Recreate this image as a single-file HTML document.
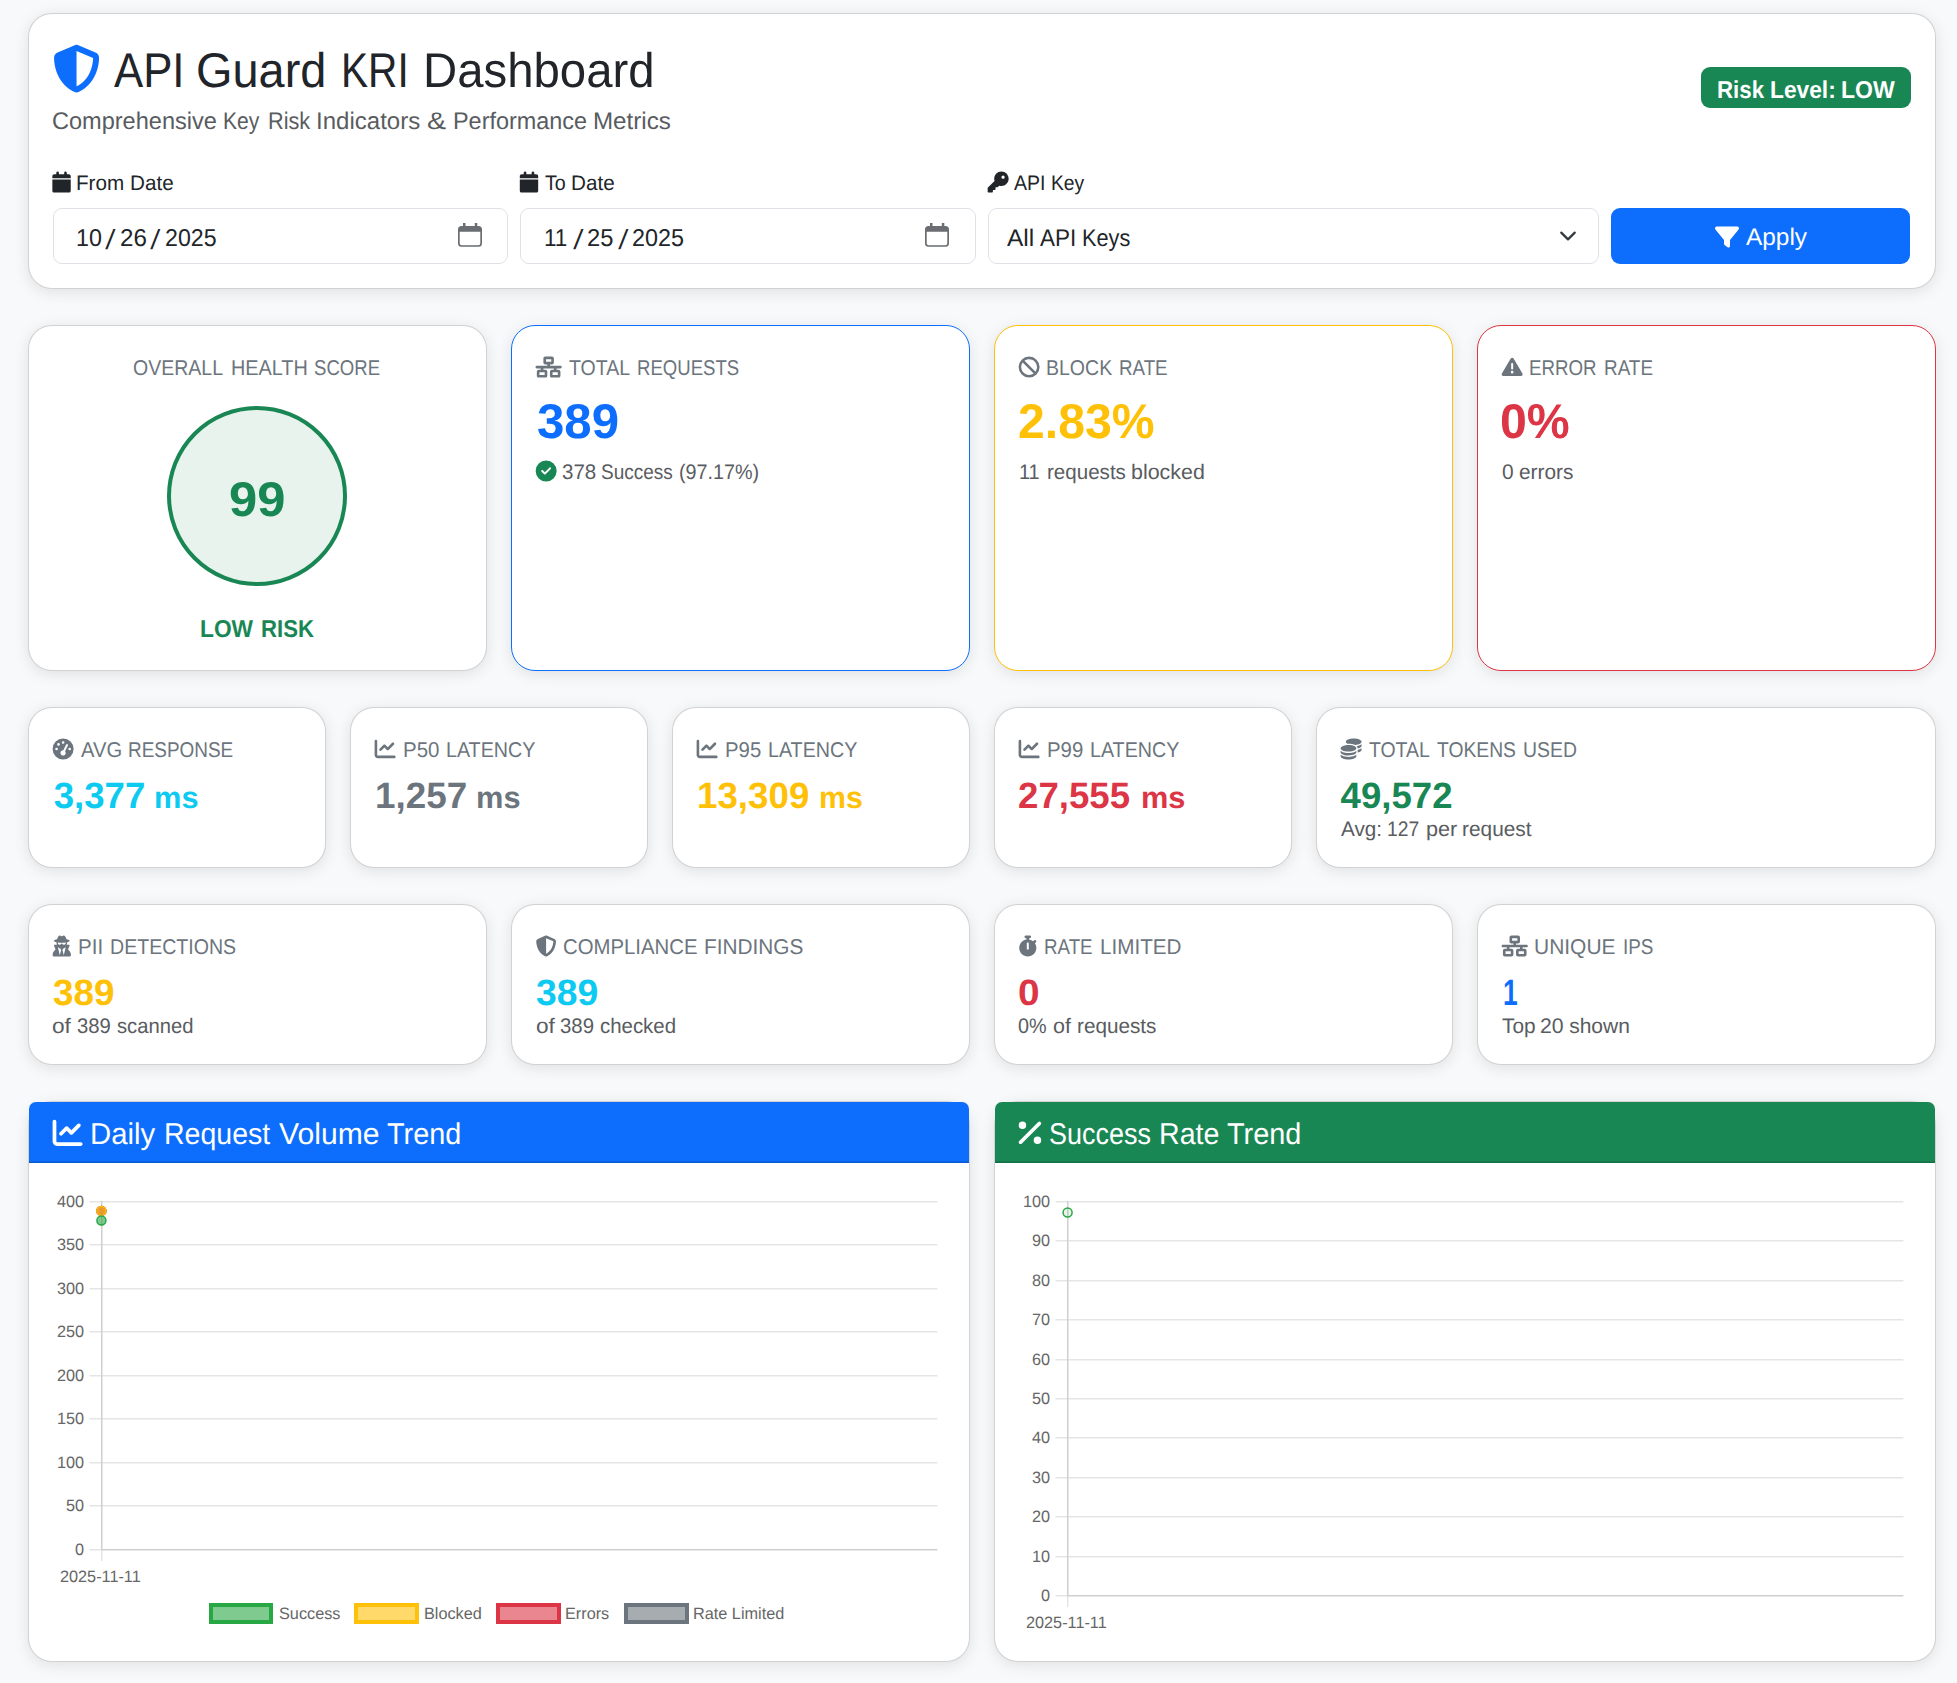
<!DOCTYPE html>
<html lang="en"><head><meta charset="utf-8"><title>API Guard KRI Dashboard</title>
<meta name="viewport" content="width=1957">
<style>
html,body{margin:0;padding:0}
body{width:1957px;height:1683px;position:relative;overflow:hidden;background:#f8f9fa;font-family:'Liberation Sans', sans-serif;text-rendering:geometricPrecision}
.card{position:absolute;box-sizing:border-box;background:#fff;border:1px solid rgba(0,0,0,.175);border-radius:24px;box-shadow:0 3px 15px rgba(0,0,0,.1)}
.hd{position:absolute;border-radius:7px 7px 0 0;box-shadow:inset 0 -1.5px 0 rgba(0,0,0,.175)}
.badge{position:absolute;background:#198754;border-radius:9px}
.inp{position:absolute;box-sizing:border-box;background:#fff;border:1px solid #dee2e6;border-radius:9px}
.btn{position:absolute;background:#0d6efd;border-radius:9px}
.circ{position:absolute;box-sizing:border-box;border:4.5px solid #198754;border-radius:50%;background:rgba(25,135,84,.1)}
.lg{position:absolute;box-sizing:border-box;width:64.5px;height:21px;border:4.5px solid;background-clip:padding-box}
.i{position:absolute;display:block;overflow:visible}
.p{margin:0;padding:0;font-size:0;line-height:0;font-weight:400}
.t{position:absolute;display:block;white-space:nowrap;line-height:1;margin:0;transform-origin:0 0}
</style></head>
<body>
<div class="card" style="left:28px;top:13px;width:1908px;height:276px;"></div>
<div class="card" style="left:28px;top:325px;width:459px;height:346px;"></div>
<div class="card" style="left:511px;top:325px;width:459px;height:346px;border-color:#0d6efd"></div>
<div class="card" style="left:994px;top:325px;width:459px;height:346px;border-color:#ffc107"></div>
<div class="card" style="left:1477px;top:325px;width:459px;height:346px;border-color:#dc3545"></div>
<div class="card" style="left:28px;top:707px;width:298px;height:161px;"></div>
<div class="card" style="left:350px;top:707px;width:298px;height:161px;"></div>
<div class="card" style="left:672px;top:707px;width:298px;height:161px;"></div>
<div class="card" style="left:994px;top:707px;width:298px;height:161px;"></div>
<div class="card" style="left:1316px;top:707px;width:620px;height:161px;"></div>
<div class="card" style="left:28px;top:904px;width:459px;height:161px;"></div>
<div class="card" style="left:511px;top:904px;width:459px;height:161px;"></div>
<div class="card" style="left:994px;top:904px;width:459px;height:161px;"></div>
<div class="card" style="left:1477px;top:904px;width:459px;height:161px;"></div>
<div class="card" style="left:28px;top:1101px;width:942px;height:561px;"></div>
<div class="card" style="left:994px;top:1101px;width:942px;height:561px;"></div>
<div class="hd" style="left:29px;top:1102px;width:940px;height:60.5px;background:#0d6efd"></div>
<div class="hd" style="left:995px;top:1102px;width:940px;height:60.5px;background:#198754"></div>
<div class="badge" style="left:1701px;top:67px;width:210px;height:41px"></div>
<div class="inp" style="left:53px;top:208px;width:455px;height:56px"></div>
<div class="inp" style="left:520px;top:208px;width:456px;height:56px"></div>
<div class="inp" style="left:988px;top:208px;width:611px;height:56px"></div>
<div class="btn" style="left:1611px;top:208px;width:299px;height:56px"></div>
<svg class="i" style="left:1558.5px;top:227px" width="18" height="18" viewBox="0 0 16 16"><path fill="none" stroke="#343a40" stroke-linecap="round" stroke-linejoin="round" stroke-width="2" d="m2 5 6 6 6-6"/></svg>
<svg class="i" style="left:458px;top:223px" width="24" height="24" viewBox="0 0 24 24"><path fill="#6a6e72" fill-rule="evenodd" d="M5 0h2.500v3h9.300V0h2.500v3h1.200a3.500 3.500 0 0 1 3.500 3.500v13.800a3.500 3.500 0 0 1-3.500 3.500h-17a3.500 3.500 0 0 1-3.500-3.500V6.500a3.500 3.500 0 0 1 3.500-3.500h1.500z M1.700 8.800v11.400a2 2 0 0 0 2 2h16.600a2 2 0 0 0 2-2V8.800z"/></svg>
<svg class="i" style="left:925px;top:223px" width="24" height="24" viewBox="0 0 24 24"><path fill="#6a6e72" fill-rule="evenodd" d="M5 0h2.500v3h9.300V0h2.500v3h1.200a3.500 3.500 0 0 1 3.500 3.500v13.800a3.500 3.500 0 0 1-3.500 3.500h-17a3.500 3.500 0 0 1-3.500-3.500V6.500a3.500 3.500 0 0 1 3.500-3.500h1.500z M1.700 8.800v11.400a2 2 0 0 0 2 2h16.600a2 2 0 0 0 2-2V8.800z"/></svg>
<svg class="i" style="left:52px;top:44px" width="50" height="50" viewBox="0 0 50 50"><path fill="#0d6efd" transform="translate(0.55 0.65) scale(0.09375)" d="M256 0c4.6 0 9.2 1 13.4 2.9l188.4 79.9c22 9.3 38.4 31 38.3 57.2-.5 99.2-41.3 280.7-213.6 363.2-16.7 8-36.1 8-52.8 0C57.3 420.7 16.6 239.2 16.1 140c-.1-26.2 16.3-47.9 38.3-57.2L242.7 2.9C246.9 1 251.4 0 256 0m0 66.8v378.1c138-66.8 175.1-214.8 176-303.4L256 66.9z"/></svg>
<svg class="i" style="left:52px;top:171px" width="20" height="23" viewBox="0 0 20 23"><path fill="#212529" transform="translate(0.36 0.60) scale(0.04102)" d="M96 32V64H48C21.5 64 0 85.5 0 112v48H448V112c0-26.5-21.5-48-48-48H352V32c0-17.7-14.3-32-32-32s-32 14.3-32 32V64H160V32c0-17.7-14.3-32-32-32S96 14.3 96 32zM448 192H0V464c0 26.5 21.5 48 48 48H400c26.500 0 48-21.500 48-48V192z"/></svg>
<svg class="i" style="left:519px;top:171px" width="21" height="23" viewBox="0 0 21 23"><path fill="#212529" transform="translate(0.80 0.60) scale(0.04102)" d="M96 32V64H48C21.5 64 0 85.5 0 112v48H448V112c0-26.5-21.5-48-48-48H352V32c0-17.7-14.3-32-32-32s-32 14.3-32 32V64H160V32c0-17.7-14.3-32-32-32S96 14.3 96 32zM448 192H0V464c0 26.5 21.5 48 48 48H400c26.500 0 48-21.500 48-48V192z"/></svg>
<svg class="i" style="left:987px;top:171px" width="23" height="23" viewBox="0 0 23 23"><path fill="#212529" transform="translate(0.65 0.55) scale(0.04102)" d="M336 352c97.2 0 176-78.8 176-176S433.2 0 336 0 160 78.8 160 176c0 18.7 2.9 36.8 8.3 53.7L7 391c-4.5 4.5-7 10.6-7 17v80c0 13.3 10.7 24 24 24h80c13.3 0 24-10.7 24-24v-40h40c13.3 0 24-10.7 24-24v-40h40c6.4 0 12.5-2.5 17-7l33.3-33.3c16.9 5.4 35 8.3 53.7 8.3m40-256a40 40 0 1 1 0 80 40 40 0 1 1 0-80"/></svg>
<svg class="i" style="left:1715px;top:225px" width="25" height="26" viewBox="0 0 25 26"><path fill="#fff" transform="translate(0.00 0.05) scale(0.04688)" d="M3.9 54.9C10.5 40.9 24.5 32 40 32H472c15.5 0 29.5 8.900 36.100 22.900s4.600 30.500-5.200 42.500L320 320.900V448c0 12.100-6.800 23.200-17.700 28.600s-23.800 4.300-33.500-3l-64-48c-8.100-6-12.800-15.500-12.800-25.600V320.900L9 97.300C-.7 85.400-2.800 68.800 3.900 54.900z"/></svg>
<svg class="i" style="left:535px;top:356px" width="28" height="23" viewBox="0 0 28 23"><path fill="#6c757d" transform="translate(0.50 0.60) scale(0.04102)" d="M256 64H384v64H256V64zM240 0c-26.500 0-48 21.500-48 48v96c0 26.500 21.500 48 48 48h48v32H32c-17.700 0-32 14.300-32 32s14.300 32 32 32h96v32H80c-26.500 0-48 21.500-48 48v96c0 26.500 21.500 48 48 48H240c26.500 0 48-21.500 48-48V368c0-26.500-21.500-48-48-48H192V288H448v32H400c-26.500 0-48 21.500-48 48v96c0 26.500 21.500 48 48 48H560c26.500 0 48-21.500 48-48V368c0-26.500-21.500-48-48-48H512V288h96c17.700 0 32-14.300 32-32s-14.300-32-32-32H352V192h48c26.500 0 48-21.500 48-48V48c0-26.500-21.500-48-48-48H240zM96 448V384H224v64H96zm320-64H544v64H416V384z"/></svg>
<svg class="i" style="left:535px;top:460px" width="23" height="23" viewBox="0 0 23 23"><path fill="#198754" transform="translate(0.65 0.45) scale(0.04102)" d="M256 512A256 256 0 1 0 256 0a256 256 0 1 0 0 512zM369 209L241 337c-9.400 9.400-24.600 9.400-33.900 0l-64-64c-9.400-9.400-9.400-24.600 0-33.900s24.600-9.400 33.900 0l47 47L335 175c9.400-9.400 24.600-9.400 33.900 0s9.400 24.600 0 33.900z"/></svg>
<svg class="i" style="left:1018px;top:356px" width="23" height="23" viewBox="0 0 23 23"><path fill="#6c757d" transform="translate(0.60 0.60) scale(0.04102)" d="M367.2 412.5 99.5 144.8C77.1 176.2 64 214.6 64 256c0 106 86 192 192 192 41.5 0 79.9-13.1 111.2-35.5m45.3-45.3C434.9 335.8 448 297.4 448 256c0-106-86-192-192-192-41.5 0-79.9 13.1-111.2 35.5zM0 256a256 256 0 1 1 512 0 256 256 0 1 1-512 0"/></svg>
<svg class="i" style="left:1501px;top:356px" width="23" height="23" viewBox="0 0 23 23"><path fill="#6c757d" transform="translate(0.65 0.40) scale(0.04102)" d="M256 32c14.200 0 27.300 7.500 34.500 19.800l216 368c7.300 12.400 7.300 27.700 .2 40.100S486.300 480 472 480H40c-14.300 0-27.600-7.700-34.700-20.100s-7-27.800 .2-40.100l216-368C228.700 39.500 241.800 32 256 32zm0 128c-13.300 0-24 10.700-24 24V296c0 13.300 10.700 24 24 24s24-10.700 24-24V184c0-13.300-10.700-24-24-24zm32 224a32 32 0 1 0 -64 0 32 32 0 1 0 64 0z"/></svg>
<svg class="i" style="left:52px;top:738px" width="23" height="23" viewBox="0 0 23 23"><path fill="#6c757d" transform="translate(0.60 0.50) scale(0.04102)" d="M0 256a256 256 0 1 1 512 0 256 256 0 1 1-512 0M288 96a32 32 0 1 0-64 0 32 32 0 1 0 64 0m-32 320c35.3 0 64-28.7 64-64 0-16.2-6-31.1-16-42.3l69.5-138.9c5.9-11.9 1.1-26.3-10.7-32.2s-26.3-1.1-32.2 10.7l-69.5 138.9c-1.7-.1-3.4-.2-5.1-.2-35.3 0-64 28.7-64 64s28.7 64 64 64m-80-272a32 32 0 1 0-64 0 32 32 0 1 0 64 0M96 288a32 32 0 1 0 0-64 32 32 0 1 0 0 64m352-32a32 32 0 1 0-64 0 32 32 0 1 0 64 0"/></svg>
<svg class="i" style="left:374px;top:738px" width="23" height="23" viewBox="0 0 23 23"><path fill="#6c757d" transform="translate(0.60 0.50) scale(0.04102)" d="M64 64c0-17.7-14.3-32-32-32S0 46.3 0 64v336c0 44.2 35.8 80 80 80h400c17.7 0 32-14.3 32-32s-14.3-32-32-32H80c-8.8 0-16-7.2-16-16zm406.6 86.6c12.5-12.5 12.5-32.8 0-45.3s-32.8-12.5-45.3 0L320 210.7l-57.4-57.3c-12.5-12.5-32.8-12.5-45.3 0l-96 96c-12.5 12.5-12.5 32.8 0 45.3s32.8 12.5 45.3 0l73.4-73.4 57.4 57.4c12.5 12.5 32.8 12.5 45.3 0l128-128z"/></svg>
<svg class="i" style="left:696px;top:738px" width="23" height="23" viewBox="0 0 23 23"><path fill="#6c757d" transform="translate(0.60 0.50) scale(0.04102)" d="M64 64c0-17.7-14.3-32-32-32S0 46.3 0 64v336c0 44.2 35.8 80 80 80h400c17.7 0 32-14.3 32-32s-14.3-32-32-32H80c-8.8 0-16-7.2-16-16zm406.6 86.6c12.5-12.5 12.5-32.8 0-45.3s-32.8-12.5-45.3 0L320 210.7l-57.4-57.3c-12.5-12.5-32.8-12.5-45.3 0l-96 96c-12.5 12.5-12.5 32.8 0 45.3s32.8 12.5 45.3 0l73.4-73.4 57.4 57.4c12.5 12.5 32.8 12.5 45.3 0l128-128z"/></svg>
<svg class="i" style="left:1018px;top:738px" width="23" height="23" viewBox="0 0 23 23"><path fill="#6c757d" transform="translate(0.60 0.50) scale(0.04102)" d="M64 64c0-17.7-14.3-32-32-32S0 46.3 0 64v336c0 44.2 35.8 80 80 80h400c17.7 0 32-14.3 32-32s-14.3-32-32-32H80c-8.8 0-16-7.2-16-16zm406.6 86.6c12.5-12.5 12.5-32.8 0-45.3s-32.8-12.5-45.3 0L320 210.7l-57.4-57.3c-12.5-12.5-32.8-12.5-45.3 0l-96 96c-12.5 12.5-12.5 32.8 0 45.3s32.8 12.5 45.3 0l73.4-73.4 57.4 57.4c12.5 12.5 32.8 12.5 45.3 0l128-128z"/></svg>
<svg class="i" style="left:1340px;top:738px" width="23" height="23" viewBox="0 0 23 23"><path fill="#6c757d" transform="translate(0.60 0.50) scale(0.04102)" d="M512 80c0 18-14.300 34.600-38.400 48c-29.100 16.100-72.500 27.500-122.300 30.900c-3.700-1.800-7.400-3.500-11.300-5C300.600 137.400 248.200 128 192 128c-8.300 0-16.400 .2-24.500 .6l-1.100-.6C142.300 114.600 128 98 128 80c0-44.200 86-80 192-80S512 35.800 512 80zM160.700 161.100c10.200-.7 20.700-1.100 31.300-1.100c62.200 0 117.400 12.300 152.500 31.400C369.300 204.900 384 221.700 384 240c0 4-.7 7.900-2.100 11.700c-4.600 13.200-17 25.300-35 35.500c0 0 0 0 0 0c-.1 .1-.3 .1-.4 .2l0 0 0 0c-.3 .2-.6 .3-.9 .5c-35 19.400-90.800 32-153.600 32c-59.600 0-112.900-11.300-148.200-29.100c-1.900-.9-3.700-1.900-5.500-2.900C14.300 274.600 0 258 0 240c0-34.800 53.400-64.500 128-75.400c10.500-1.500 21.400-2.700 32.700-3.500zM416 240c0-21.900-10.600-39.900-24.100-53.400c28.300-4.400 54.200-11.400 76.200-20.500c16.300-6.800 31.500-15.200 43.900-25.500V176c0 19.300-16.500 37.100-43.800 50.900c-14.600 7.400-32.400 13.700-52.400 18.500c.1-1.800 .2-3.500 .2-5.300zm-32 96c0 18-14.300 34.600-38.400 48c-1.800 1-3.600 1.900-5.500 2.900C304.900 404.700 251.600 416 192 416c-62.800 0-118.600-12.600-153.600-32C14.300 370.600 0 354 0 336V300.600c12.500 10.300 27.600 18.700 43.900 25.500C83.400 342.600 135.800 352 192 352s108.600-9.400 148.100-25.900c7.800-3.200 15.300-6.900 22.400-10.900c6.100-3.400 11.800-7.200 17.200-11.200c1.500-1.100 2.900-2.300 4.300-3.400V304v5.700V336zm32 0V304 278.100c19-4.200 36.500-9.500 52.100-16c16.300-6.800 31.500-15.200 43.900-25.500V272c0 10.500-5 21-14.900 30.900c-16.300 16.300-45 29.700-81.300 38.400c.1-1.700 .2-3.500 .2-5.300zM192 448c56.200 0 108.600-9.400 148.100-25.900c16.300-6.800 31.500-15.200 43.900-25.500V432c0 44.200-86 80-192 80S0 476.200 0 432V396.600c12.500 10.300 27.600 18.700 43.900 25.500C83.400 438.600 135.800 448 192 448z"/></svg>
<svg class="i" style="left:52px;top:935px" width="20" height="23" viewBox="0 0 20 23"><path fill="#6c757d" transform="translate(0.60 0.50) scale(0.04102)" d="M224 16c-6.700 0-10.800-2.800-15.500-6.100C201.900 5.400 194 0 176 0c-30.500 0-52 43.700-66 89.400C62.700 98.100 32 112.200 32 128c0 14.300 25 27.100 64.600 35.900c-.4 4-.6 8-.6 12.100c0 17 3.300 33.200 9.300 48H45.400C38 224 32 230 32 237.400c0 1.700 .3 3.400 1 5l38.800 96.900C28.200 371.800 0 423.800 0 482.300C0 498.700 13.300 512 29.700 512H418.300c16.400 0 29.700-13.300 29.700-29.700c0-58.500-28.200-110.400-71.700-143L415 242.400c.6-1.600 1-3.300 1-5c0-7.400-6-13.400-13.400-13.400H342.700c6-14.800 9.300-31 9.300-48c0-4.100-.2-8.100-.6-12.100C391 155.100 416 142.300 416 128c0-15.800-30.700-29.900-78-38.600C324 43.700 302.500 0 272 0c-18 0-25.900 5.400-32.500 9.900c-4.800 3.300-8.800 6.100-15.500 6.100zm56 208H267.600c-16.500 0-31.100-10.600-36.300-26.200c-2.300-7-12.200-7-14.500 0c-5.200 15.600-19.900 26.200-36.300 26.200H168c-22.100 0-40-17.900-40-40V169.600c28.200 4.100 61 6.400 96 6.400s67.800-2.300 96-6.400V184c0 22.100-17.900 40-40 40zm-88 96l16 32L176 480 128 288l64 32zm128-32L272 480 240 352l16-32 64-32z"/></svg>
<svg class="i" style="left:535px;top:935px" width="23" height="23" viewBox="0 0 23 23"><path fill="#6c757d" transform="translate(0.60 0.50) scale(0.04102)" d="M256 0c4.6 0 9.2 1 13.4 2.9l188.4 79.9c22 9.3 38.4 31 38.3 57.2-.5 99.2-41.3 280.7-213.6 363.2-16.7 8-36.1 8-52.8 0C57.3 420.7 16.6 239.2 16.1 140c-.1-26.2 16.3-47.9 38.3-57.2L242.7 2.9C246.9 1 251.4 0 256 0m0 66.8v378.1c138-66.8 175.1-214.8 176-303.4L256 66.9z"/></svg>
<svg class="i" style="left:1018px;top:935px" width="20" height="23" viewBox="0 0 20 23"><path fill="#6c757d" transform="translate(0.60 0.50) scale(0.04102)" d="M176 0c-17.700 0-32 14.300-32 32s14.300 32 32 32h16V98.400C92.300 113.800 16 200 16 304c0 114.900 93.100 208 208 208s208-93.100 208-208c0-41.800-12.300-80.700-33.500-113.200l24.100-24.100c12.500-12.500 12.500-32.800 0-45.300s-32.800-12.500-45.300 0L355.700 143c-28.100-23-62.200-38.800-99.700-44.600V64h16c17.700 0 32-14.300 32-32s-14.300-32-32-32H224 176zm72 192V320c0 13.300-10.700 24-24 24s-24-10.700-24-24V192c0-13.300 10.700-24 24-24s24 10.700 24 24z"/></svg>
<svg class="i" style="left:1501px;top:935px" width="28" height="23" viewBox="0 0 28 23"><path fill="#6c757d" transform="translate(0.60 0.50) scale(0.04102)" d="M256 64H384v64H256V64zM240 0c-26.500 0-48 21.500-48 48v96c0 26.500 21.500 48 48 48h48v32H32c-17.700 0-32 14.300-32 32s14.300 32 32 32h96v32H80c-26.500 0-48 21.500-48 48v96c0 26.500 21.500 48 48 48H240c26.500 0 48-21.500 48-48V368c0-26.500-21.500-48-48-48H192V288H448v32H400c-26.500 0-48 21.500-48 48v96c0 26.500 21.500 48 48 48H560c26.500 0 48-21.500 48-48V368c0-26.500-21.500-48-48-48H512V288h96c17.700 0 32-14.300 32-32s-14.300-32-32-32H352V192h48c26.500 0 48-21.500 48-48V48c0-26.500-21.500-48-48-48H240zM96 448V384H224v64H96zm320-64H544v64H416V384z"/></svg>
<svg class="i" style="left:52px;top:1117px" width="32" height="32" viewBox="0 0 32 32"><path fill="#fff" transform="translate(0.60 0.85) scale(0.05859)" d="M64 64c0-17.7-14.3-32-32-32S0 46.3 0 64v336c0 44.2 35.8 80 80 80h400c17.7 0 32-14.3 32-32s-14.3-32-32-32H80c-8.8 0-16-7.2-16-16zm406.6 86.6c12.5-12.5 12.5-32.8 0-45.3s-32.8-12.5-45.3 0L320 210.7l-57.4-57.3c-12.5-12.5-32.8-12.5-45.3 0l-96 96c-12.5 12.5-12.5 32.8 0 45.3s32.8 12.5 45.3 0l73.4-73.4 57.4 57.4c12.5 12.5 32.8 12.5 45.3 0l128-128z"/></svg>
<svg class="i" style="left:1018px;top:1117px" width="25" height="32" viewBox="0 0 25 32"><path fill="#fff" transform="translate(0.70 0.85) scale(0.05859)" d="M374.6 118.6c12.5-12.5 12.5-32.8 0-45.3s-32.8-12.5-45.3 0l-320 320c-12.5 12.5-12.5 32.8 0 45.3s32.8 12.5 45.3 0l320-320zM128 128A64 64 0 1 0 0 128a64 64 0 1 0 128 0zM384 384a64 64 0 1 0-128 0 64 64 0 1 0 128 0z"/></svg>
<div class="circ" style="left:167px;top:406px;width:180px;height:180px"></div>
<svg class="i" style="left:0;top:0" width="1957" height="1683" viewBox="0 0 1957 1683"><rect x="89.5" y="1201" width="11.5" height="1.5" fill="rgba(0,0,0,0.1)"/><rect x="102.5" y="1201" width="834.9" height="1.5" fill="rgba(0,0,0,0.1)"/><rect x="89.5" y="1244" width="11.5" height="1.5" fill="rgba(0,0,0,0.1)"/><rect x="102.5" y="1244" width="834.9" height="1.5" fill="rgba(0,0,0,0.1)"/><rect x="89.5" y="1288" width="11.5" height="1.5" fill="rgba(0,0,0,0.1)"/><rect x="102.5" y="1288" width="834.9" height="1.5" fill="rgba(0,0,0,0.1)"/><rect x="89.5" y="1331" width="11.5" height="1.5" fill="rgba(0,0,0,0.1)"/><rect x="102.5" y="1331" width="834.9" height="1.5" fill="rgba(0,0,0,0.1)"/><rect x="89.5" y="1375" width="11.5" height="1.5" fill="rgba(0,0,0,0.1)"/><rect x="102.5" y="1375" width="834.9" height="1.5" fill="rgba(0,0,0,0.1)"/><rect x="89.5" y="1418" width="11.5" height="1.5" fill="rgba(0,0,0,0.1)"/><rect x="102.5" y="1418" width="834.9" height="1.5" fill="rgba(0,0,0,0.1)"/><rect x="89.5" y="1462" width="11.5" height="1.5" fill="rgba(0,0,0,0.1)"/><rect x="102.5" y="1462" width="834.9" height="1.5" fill="rgba(0,0,0,0.1)"/><rect x="89.5" y="1505" width="11.5" height="1.5" fill="rgba(0,0,0,0.1)"/><rect x="102.5" y="1505" width="834.9" height="1.5" fill="rgba(0,0,0,0.1)"/><rect x="89.5" y="1549" width="11.5" height="1.5" fill="rgba(0,0,0,0.1)"/><rect x="102.5" y="1549" width="834.9" height="1.5" fill="rgba(0,0,0,0.19)"/><rect x="101" y="1201" width="1.5" height="349.5" fill="rgba(0,0,0,0.19)"/><rect x="101" y="1550.5" width="1.5" height="10.5" fill="rgba(0,0,0,0.1)"/><circle cx="101.4" cy="1210.9" r="4.5" fill="rgba(108,117,125,0.6)" stroke="#6c757d" stroke-width="1.5"/><circle cx="101.4" cy="1210.9" r="4.5" fill="rgba(220,53,69,0.6)" stroke="#dc3545" stroke-width="1.5"/><circle cx="101.4" cy="1210.9" r="4.5" fill="rgba(255,193,7,0.6)" stroke="#ffc107" stroke-width="1.5"/><circle cx="101.4" cy="1220.5" r="4.5" fill="rgba(40,167,69,0.6)" stroke="#28a745" stroke-width="1.5"/></svg>
<svg class="i" style="left:0;top:0" width="1957" height="1683" viewBox="0 0 1957 1683"><rect x="1055.5" y="1201" width="11.5" height="1.5" fill="rgba(0,0,0,0.1)"/><rect x="1068.5" y="1201" width="834.9000000000001" height="1.5" fill="rgba(0,0,0,0.1)"/><rect x="1055.5" y="1240" width="11.5" height="1.5" fill="rgba(0,0,0,0.1)"/><rect x="1068.5" y="1240" width="834.9000000000001" height="1.5" fill="rgba(0,0,0,0.1)"/><rect x="1055.5" y="1280" width="11.5" height="1.5" fill="rgba(0,0,0,0.1)"/><rect x="1068.5" y="1280" width="834.9000000000001" height="1.5" fill="rgba(0,0,0,0.1)"/><rect x="1055.5" y="1319" width="11.5" height="1.5" fill="rgba(0,0,0,0.1)"/><rect x="1068.5" y="1319" width="834.9000000000001" height="1.5" fill="rgba(0,0,0,0.1)"/><rect x="1055.5" y="1359" width="11.5" height="1.5" fill="rgba(0,0,0,0.1)"/><rect x="1068.5" y="1359" width="834.9000000000001" height="1.5" fill="rgba(0,0,0,0.1)"/><rect x="1055.5" y="1398" width="11.5" height="1.5" fill="rgba(0,0,0,0.1)"/><rect x="1068.5" y="1398" width="834.9000000000001" height="1.5" fill="rgba(0,0,0,0.1)"/><rect x="1055.5" y="1437" width="11.5" height="1.5" fill="rgba(0,0,0,0.1)"/><rect x="1068.5" y="1437" width="834.9000000000001" height="1.5" fill="rgba(0,0,0,0.1)"/><rect x="1055.5" y="1477" width="11.5" height="1.5" fill="rgba(0,0,0,0.1)"/><rect x="1068.5" y="1477" width="834.9000000000001" height="1.5" fill="rgba(0,0,0,0.1)"/><rect x="1055.5" y="1516" width="11.5" height="1.5" fill="rgba(0,0,0,0.1)"/><rect x="1068.5" y="1516" width="834.9000000000001" height="1.5" fill="rgba(0,0,0,0.1)"/><rect x="1055.5" y="1556" width="11.5" height="1.5" fill="rgba(0,0,0,0.1)"/><rect x="1068.5" y="1556" width="834.9000000000001" height="1.5" fill="rgba(0,0,0,0.1)"/><rect x="1055.5" y="1595" width="11.5" height="1.5" fill="rgba(0,0,0,0.1)"/><rect x="1068.5" y="1595" width="834.9000000000001" height="1.5" fill="rgba(0,0,0,0.19)"/><rect x="1067" y="1201" width="1.5" height="395.5" fill="rgba(0,0,0,0.19)"/><rect x="1067" y="1596.5" width="1.5" height="10.5" fill="rgba(0,0,0,0.1)"/><circle cx="1067.6" cy="1212.5" r="4.5" fill="rgba(40,167,69,0.1)" stroke="#28a745" stroke-width="1.5"/></svg>
<div class="lg" style="left:208.8px;top:1603px;background:rgba(40,167,69,0.6);border-color:#28a745"></div>
<div class="lg" style="left:354.4px;top:1603px;background:rgba(255,193,7,0.6);border-color:#ffc107"></div>
<div class="lg" style="left:496.2px;top:1603px;background:rgba(220,53,69,0.6);border-color:#dc3545"></div>
<div class="lg" style="left:624.4px;top:1603px;background:rgba(108,117,125,0.6);border-color:#6c757d"></div>
<h1 class="p"><span class="t" style="left:113.97px;top:47px;font-size:48.82px;color:#212529;transform:scaleX(0.8961)">API</span> <span class="t" style="left:196.48px;top:47px;font-size:48.82px;color:#212529;transform:scaleX(0.9611)">Guard</span> <span class="t" style="left:340.82px;top:47px;font-size:48.82px;color:#212529;transform:scaleX(0.8322)">KRI</span> <span class="t" style="left:422.93px;top:47px;font-size:48.82px;color:#212529;transform:scaleX(0.9697)">Dashboard</span></h1>
<p class="p"><span class="t" style="left:52.21px;top:110px;font-size:24.0px;color:#595c5f;transform:scaleX(0.9807)">Comprehensive</span> <span class="t" style="left:223.17px;top:110px;font-size:24.0px;color:#595c5f;transform:scaleX(0.8783)">Key</span> <span class="t" style="left:268.04px;top:110px;font-size:24.0px;color:#595c5f;transform:scaleX(0.9036)">Risk</span> <span class="t" style="left:316.10px;top:110px;font-size:24.0px;color:#595c5f">Indicators</span> <span class="t" style="left:427.14px;top:110px;font-size:24.0px;color:#595c5f;transform:scaleX(1.1975)">&amp;</span> <span class="t" style="left:452.85px;top:110px;font-size:24.0px;color:#595c5f;transform:scaleX(0.9753)">Performance</span> <span class="t" style="left:592.78px;top:110px;font-size:24.0px;color:#595c5f;transform:scaleX(1.0062)">Metrics</span></p>
<div class="p"><span class="t" style="left:1716.59px;top:79px;font-size:24.41px;color:#fff;font-weight:700;transform:scaleX(0.9130)">Risk</span> <span class="t" style="left:1770.06px;top:79px;font-size:24.41px;color:#fff;font-weight:700;transform:scaleX(0.9322)">Level:</span> <span class="t" style="left:1840.73px;top:79px;font-size:24.41px;color:#fff;font-weight:700;transform:scaleX(0.9430)">LOW</span></div>
<div class="p"><span class="t" style="left:76.41px;top:173px;font-size:21.0px;color:#212529;transform:scaleX(0.9837)">From</span> <span class="t" style="left:130.21px;top:173px;font-size:21.0px;color:#212529;transform:scaleX(0.9835)">Date</span></div>
<div class="p"><span class="t" style="left:544.63px;top:173px;font-size:21.0px;color:#212529;transform:scaleX(0.9359)">To</span> <span class="t" style="left:571.41px;top:173px;font-size:21.0px;color:#212529;transform:scaleX(0.9835)">Date</span></div>
<div class="p"><span class="t" style="left:1013.98px;top:173px;font-size:21.0px;color:#212529;transform:scaleX(0.9288)">API</span> <span class="t" style="left:1050.79px;top:173px;font-size:21.0px;color:#212529;transform:scaleX(0.9167)">Key</span></div>
<div class="p"><span class="t" style="left:76.34px;top:227px;font-size:24.41px;color:#212529;transform:scaleX(0.9538)">10</span> <span class="t" style="left:108.37px;top:226px;font-size:27.6px;color:#212529;transform:skewX(-7deg) scaleX(1.0110)">/</span> <span class="t" style="left:119.61px;top:227px;font-size:24.41px;color:#212529;transform:scaleX(0.9896)">26</span> <span class="t" style="left:153.37px;top:226px;font-size:27.6px;color:#212529;transform:skewX(-7deg) scaleX(0.9906)">/</span> <span class="t" style="left:164.65px;top:227px;font-size:24.41px;color:#212529;transform:scaleX(0.9488)">2025</span></div>
<div class="p"><span class="t" style="left:543.59px;top:227px;font-size:24.41px;color:#212529;transform:scaleX(0.9222)">11</span> <span class="t" style="left:575.97px;top:226px;font-size:27.6px;color:#212529;transform:skewX(-7deg) scaleX(1.0110)">/</span> <span class="t" style="left:587.11px;top:227px;font-size:24.41px;color:#212529;transform:scaleX(0.9724)">25</span> <span class="t" style="left:620.57px;top:226px;font-size:27.6px;color:#212529;transform:skewX(-7deg) scaleX(1.0008)">/</span> <span class="t" style="left:631.75px;top:227px;font-size:24.41px;color:#212529;transform:scaleX(0.9565)">2025</span></div>
<div class="p"><span class="t" style="left:1006.68px;top:227px;font-size:24.0px;color:#212529;transform:scaleX(1.0186)">All</span> <span class="t" style="left:1040.38px;top:227px;font-size:24.0px;color:#212529;transform:scaleX(0.9359)">API</span> <span class="t" style="left:1081.64px;top:227px;font-size:24.0px;color:#212529;transform:scaleX(0.9042)">Keys</span></div>
<div class="p"><span class="t" style="left:1745.88px;top:226px;font-size:24.0px;color:#fff;transform:scaleX(1.0168)">Apply</span></div>
<div class="p"><span class="t" style="left:133.15px;top:358px;font-size:21.36px;color:#6c757d;transform:scaleX(0.9135)">OVERALL</span> <span class="t" style="left:230.64px;top:358px;font-size:21.36px;color:#6c757d;transform:scaleX(0.9283)">HEALTH</span> <span class="t" style="left:313.99px;top:358px;font-size:21.36px;color:#6c757d;transform:scaleX(0.8691)">SCORE</span></div>
<div class="p"><span class="t" style="left:228.93px;top:476px;font-size:48.82px;color:#198754;font-weight:700;transform:scaleX(1.0391)">99</span></div>
<div class="p"><span class="t" style="left:199.86px;top:618px;font-size:24.41px;color:#198754;font-weight:700;transform:scaleX(0.9312)">LOW</span> <span class="t" style="left:261.29px;top:618px;font-size:24.41px;color:#198754;font-weight:700;transform:scaleX(0.9071)">RISK</span></div>
<div class="p"><span class="t" style="left:569.02px;top:358px;font-size:21.36px;color:#6c757d;transform:scaleX(0.9135)">TOTAL</span> <span class="t" style="left:637.33px;top:358px;font-size:21.36px;color:#6c757d;transform:scaleX(0.8694)">REQUESTS</span></div>
<div class="p"><span class="t" style="left:536.75px;top:398px;font-size:48.82px;color:#0d6efd;font-weight:700;transform:scaleX(1.0082)">389</span></div>
<div class="p"><span class="t" style="left:562.25px;top:462px;font-size:21.0px;color:#595c5f;transform:scaleX(0.9761)">378</span> <span class="t" style="left:601.28px;top:462px;font-size:21.0px;color:#595c5f;transform:scaleX(0.9044)">Success</span> <span class="t" style="left:678.60px;top:462px;font-size:21.0px;color:#595c5f;transform:scaleX(0.9405)">(97.17%)</span></div>
<div class="p"><span class="t" style="left:1046.37px;top:358px;font-size:21.36px;color:#6c757d;transform:scaleX(0.9134)">BLOCK</span> <span class="t" style="left:1119.42px;top:358px;font-size:21.36px;color:#6c757d;transform:scaleX(0.8782)">RATE</span></div>
<div class="p"><span class="t" style="left:1018.43px;top:398px;font-size:48.82px;color:#ffc107;font-weight:700;transform:scaleX(0.9874)">2.83%</span></div>
<div class="p"><span class="t" style="left:1018.87px;top:462px;font-size:21.0px;color:#595c5f;transform:scaleX(0.9481)">11</span> <span class="t" style="left:1046.58px;top:462px;font-size:21.0px;color:#595c5f;transform:scaleX(0.9795)">requests</span> <span class="t" style="left:1130.95px;top:462px;font-size:21.0px;color:#595c5f;transform:scaleX(1.0194)">blocked</span></div>
<div class="p"><span class="t" style="left:1529.23px;top:358px;font-size:21.36px;color:#6c757d;transform:scaleX(0.8759)">ERROR</span> <span class="t" style="left:1603.72px;top:358px;font-size:21.36px;color:#6c757d;transform:scaleX(0.8847)">RATE</span></div>
<div class="p"><span class="t" style="left:1500.30px;top:398px;font-size:48.82px;color:#dc3545;font-weight:700;transform:scaleX(0.9891)">0%</span></div>
<div class="p"><span class="t" style="left:1501.51px;top:462px;font-size:21.0px;color:#595c5f;transform:scaleX(0.9953)">0</span> <span class="t" style="left:1518.57px;top:462px;font-size:21.0px;color:#595c5f;transform:scaleX(0.9903)">errors</span></div>
<div class="p"><span class="t" style="left:80.58px;top:740px;font-size:21.36px;color:#6c757d;transform:scaleX(0.9436)">AVG</span> <span class="t" style="left:128.42px;top:740px;font-size:21.36px;color:#6c757d;transform:scaleX(0.8863)">RESPONSE</span></div>
<div class="p"><span class="t" style="left:53.72px;top:778px;font-size:36.61px;color:#0dcaf0;font-weight:700">3,377</span> <span class="t" style="left:154.22px;top:783px;font-size:30.55px;color:#0dcaf0;font-weight:700;transform:scaleX(1.0082)">ms</span></div>
<div class="p"><span class="t" style="left:402.52px;top:740px;font-size:21.36px;color:#6c757d;transform:scaleX(0.9577)">P50</span> <span class="t" style="left:445.67px;top:740px;font-size:21.36px;color:#6c757d;transform:scaleX(0.9212)">LATENCY</span></div>
<div class="p"><span class="t" style="left:375.42px;top:778px;font-size:36.61px;color:#6c757d;font-weight:700;transform:scaleX(1.0057)">1,257</span> <span class="t" style="left:476.22px;top:783px;font-size:30.55px;color:#6c757d;font-weight:700;transform:scaleX(1.0082)">ms</span></div>
<div class="p"><span class="t" style="left:724.52px;top:740px;font-size:21.36px;color:#6c757d;transform:scaleX(0.9529)">P95</span> <span class="t" style="left:767.67px;top:740px;font-size:21.36px;color:#6c757d;transform:scaleX(0.9212)">LATENCY</span></div>
<div class="p"><span class="t" style="left:697.02px;top:778px;font-size:36.61px;color:#ffc107;font-weight:700;transform:scaleX(1.0034)">13,309</span> <span class="t" style="left:819.04px;top:783px;font-size:30.55px;color:#ffc107;font-weight:700;transform:scaleX(0.9917)">ms</span></div>
<div class="p"><span class="t" style="left:1046.52px;top:740px;font-size:21.36px;color:#6c757d;transform:scaleX(0.9549)">P99</span> <span class="t" style="left:1089.67px;top:740px;font-size:21.36px;color:#6c757d;transform:scaleX(0.9212)">LATENCY</span></div>
<div class="p"><span class="t" style="left:1018.07px;top:778px;font-size:36.61px;color:#dc3545;font-weight:700">27,555</span> <span class="t" style="left:1141.02px;top:783px;font-size:30.55px;color:#dc3545;font-weight:700;transform:scaleX(1.0072)">ms</span></div>
<div class="p"><span class="t" style="left:1369.02px;top:740px;font-size:21.36px;color:#6c757d;transform:scaleX(0.9090)">TOTAL</span> <span class="t" style="left:1437.13px;top:740px;font-size:21.36px;color:#6c757d;transform:scaleX(0.9031)">TOKENS</span> <span class="t" style="left:1522.77px;top:740px;font-size:21.36px;color:#6c757d;transform:scaleX(0.9082)">USED</span></div>
<div class="p"><span class="t" style="left:1340.62px;top:778px;font-size:36.61px;color:#198754;font-weight:700">49,572</span></div>
<div class="p"><span class="t" style="left:1340.88px;top:819px;font-size:21.0px;color:#595c5f;transform:scaleX(0.9857)">Avg:</span> <span class="t" style="left:1387.30px;top:819px;font-size:21.0px;color:#595c5f;transform:scaleX(0.9196)">127</span> <span class="t" style="left:1425.83px;top:819px;font-size:21.0px;color:#595c5f;transform:scaleX(1.0308)">per</span> <span class="t" style="left:1462.45px;top:819px;font-size:21.0px;color:#595c5f;transform:scaleX(0.9926)">request</span></div>
<div class="p"><span class="t" style="left:78.01px;top:937px;font-size:21.36px;color:#6c757d;transform:scaleX(0.9607)">PII</span> <span class="t" style="left:109.97px;top:937px;font-size:21.36px;color:#6c757d;transform:scaleX(0.9161)">DETECTIONS</span></div>
<div class="p"><span class="t" style="left:52.92px;top:975px;font-size:36.61px;color:#ffc107;font-weight:700;transform:scaleX(1.0068)">389</span></div>
<div class="p"><span class="t" style="left:52.43px;top:1016px;font-size:21.0px;color:#595c5f;transform:scaleX(1.0790)">of</span> <span class="t" style="left:77.25px;top:1016px;font-size:21.0px;color:#595c5f;transform:scaleX(0.9644)">389</span> <span class="t" style="left:116.60px;top:1016px;font-size:21.0px;color:#595c5f;transform:scaleX(0.9627)">scanned</span></div>
<div class="p"><span class="t" style="left:563.14px;top:937px;font-size:21.36px;color:#6c757d;transform:scaleX(0.9524)">COMPLIANCE</span> <span class="t" style="left:704.39px;top:937px;font-size:21.36px;color:#6c757d;transform:scaleX(0.9738)">FINDINGS</span></div>
<div class="p"><span class="t" style="left:536.01px;top:975px;font-size:36.61px;color:#0dcaf0;font-weight:700;transform:scaleX(1.0189)">389</span></div>
<div class="p"><span class="t" style="left:535.73px;top:1016px;font-size:21.0px;color:#595c5f;transform:scaleX(1.0790)">of</span> <span class="t" style="left:560.05px;top:1016px;font-size:21.0px;color:#595c5f;transform:scaleX(0.9704)">389</span> <span class="t" style="left:599.77px;top:1016px;font-size:21.0px;color:#595c5f;transform:scaleX(0.9718)">checked</span></div>
<div class="p"><span class="t" style="left:1044.02px;top:937px;font-size:21.36px;color:#6c757d;transform:scaleX(0.8782)">RATE</span> <span class="t" style="left:1099.71px;top:937px;font-size:21.36px;color:#6c757d;transform:scaleX(0.9668)">LIMITED</span></div>
<div class="p"><span class="t" style="left:1018.22px;top:975px;font-size:36.61px;color:#dc3545;font-weight:700;transform:scaleX(1.0594)">0</span></div>
<div class="p"><span class="t" style="left:1018.43px;top:1016px;font-size:21.0px;color:#595c5f;transform:scaleX(0.9410)">0%</span> <span class="t" style="left:1052.65px;top:1016px;font-size:21.0px;color:#595c5f;transform:scaleX(1.0217)">of</span> <span class="t" style="left:1076.66px;top:1016px;font-size:21.0px;color:#595c5f;transform:scaleX(0.9859)">requests</span></div>
<div class="p"><span class="t" style="left:1534.37px;top:937px;font-size:21.36px;color:#6c757d;transform:scaleX(0.9819)">UNIQUE</span> <span class="t" style="left:1622.55px;top:937px;font-size:21.36px;color:#6c757d;transform:scaleX(0.8847)">IPS</span></div>
<div class="p"><span class="t" style="left:1503.02px;top:975px;font-size:36.61px;color:#0d6efd;font-weight:700;transform:scaleX(0.7211)">1</span></div>
<div class="p"><span class="t" style="left:1501.50px;top:1016px;font-size:21.0px;color:#595c5f;transform:scaleX(0.9925)">Top</span> <span class="t" style="left:1540.32px;top:1016px;font-size:21.0px;color:#595c5f;transform:scaleX(1.0110)">20</span> <span class="t" style="left:1569.20px;top:1016px;font-size:21.0px;color:#595c5f">shown</span></div>
<h5 class="p"><span class="t" style="left:90.15px;top:1120px;font-size:30.0px;color:#fff;transform:scaleX(0.9763)">Daily</span> <span class="t" style="left:163.91px;top:1120px;font-size:30.0px;color:#fff;transform:scaleX(0.9506)">Request</span> <span class="t" style="left:278.81px;top:1120px;font-size:30.0px;color:#fff;transform:scaleX(1.0044)">Volume</span> <span class="t" style="left:387.24px;top:1120px;font-size:30.0px;color:#fff;transform:scaleX(0.9606)">Trend</span></h5>
<h5 class="p"><span class="t" style="left:1049.38px;top:1120px;font-size:30.0px;color:#fff;transform:scaleX(0.8986)">Success</span> <span class="t" style="left:1158.69px;top:1120px;font-size:30.0px;color:#fff;transform:scaleX(0.9528)">Rate</span> <span class="t" style="left:1226.54px;top:1120px;font-size:30.0px;color:#fff;transform:scaleX(0.9633)">Trend</span></h5>
<div class="p"><span class="t" style="left:57.33px;top:1194px;font-size:16.5px;color:#666;transform:scaleX(0.9850)">400</span></div>
<div class="p"><span class="t" style="left:57.33px;top:1237px;font-size:16.5px;color:#666;transform:scaleX(0.9850)">350</span></div>
<div class="p"><span class="t" style="left:57.33px;top:1281px;font-size:16.5px;color:#666;transform:scaleX(0.9850)">300</span></div>
<div class="p"><span class="t" style="left:57.33px;top:1324px;font-size:16.5px;color:#666;transform:scaleX(0.9850)">250</span></div>
<div class="p"><span class="t" style="left:57.33px;top:1368px;font-size:16.5px;color:#666;transform:scaleX(0.9850)">200</span></div>
<div class="p"><span class="t" style="left:57.33px;top:1411px;font-size:16.5px;color:#666;transform:scaleX(0.9850)">150</span></div>
<div class="p"><span class="t" style="left:57.33px;top:1455px;font-size:16.5px;color:#666;transform:scaleX(0.9850)">100</span></div>
<div class="p"><span class="t" style="left:66.33px;top:1498px;font-size:16.5px;color:#666;transform:scaleX(0.9850)">50</span></div>
<div class="p"><span class="t" style="left:75.33px;top:1542px;font-size:16.5px;color:#666;transform:scaleX(0.9850)">0</span></div>
<div class="p"><span class="t" style="left:59.81px;top:1569px;font-size:16.5px;color:#666;transform:scaleX(0.9850)">2025-11-11</span></div>
<div class="p"><span class="t" style="left:278.75px;top:1606px;font-size:16.5px;color:#666;transform:scaleX(0.9850)">Success</span></div>
<div class="p"><span class="t" style="left:424.01px;top:1606px;font-size:16.5px;color:#666;transform:scaleX(0.9850)">Blocked</span></div>
<div class="p"><span class="t" style="left:565.41px;top:1606px;font-size:16.5px;color:#666;transform:scaleX(0.9850)">Errors</span></div>
<div class="p"><span class="t" style="left:693.11px;top:1606px;font-size:16.5px;color:#666;transform:scaleX(0.9850)">Rate Limited</span></div>
<div class="p"><span class="t" style="left:1023.43px;top:1194px;font-size:16.5px;color:#666;transform:scaleX(0.9850)">100</span></div>
<div class="p"><span class="t" style="left:1032.43px;top:1233px;font-size:16.5px;color:#666;transform:scaleX(0.9850)">90</span></div>
<div class="p"><span class="t" style="left:1032.43px;top:1273px;font-size:16.5px;color:#666;transform:scaleX(0.9850)">80</span></div>
<div class="p"><span class="t" style="left:1032.43px;top:1312px;font-size:16.5px;color:#666;transform:scaleX(0.9850)">70</span></div>
<div class="p"><span class="t" style="left:1032.43px;top:1352px;font-size:16.5px;color:#666;transform:scaleX(0.9850)">60</span></div>
<div class="p"><span class="t" style="left:1032.43px;top:1391px;font-size:16.5px;color:#666;transform:scaleX(0.9850)">50</span></div>
<div class="p"><span class="t" style="left:1032.43px;top:1430px;font-size:16.5px;color:#666;transform:scaleX(0.9850)">40</span></div>
<div class="p"><span class="t" style="left:1032.43px;top:1470px;font-size:16.5px;color:#666;transform:scaleX(0.9850)">30</span></div>
<div class="p"><span class="t" style="left:1032.43px;top:1509px;font-size:16.5px;color:#666;transform:scaleX(0.9850)">20</span></div>
<div class="p"><span class="t" style="left:1032.43px;top:1549px;font-size:16.5px;color:#666;transform:scaleX(0.9850)">10</span></div>
<div class="p"><span class="t" style="left:1041.43px;top:1588px;font-size:16.5px;color:#666;transform:scaleX(0.9850)">0</span></div>
<div class="p"><span class="t" style="left:1025.71px;top:1615px;font-size:16.5px;color:#666;transform:scaleX(0.9850)">2025-11-11</span></div>
</body></html>
